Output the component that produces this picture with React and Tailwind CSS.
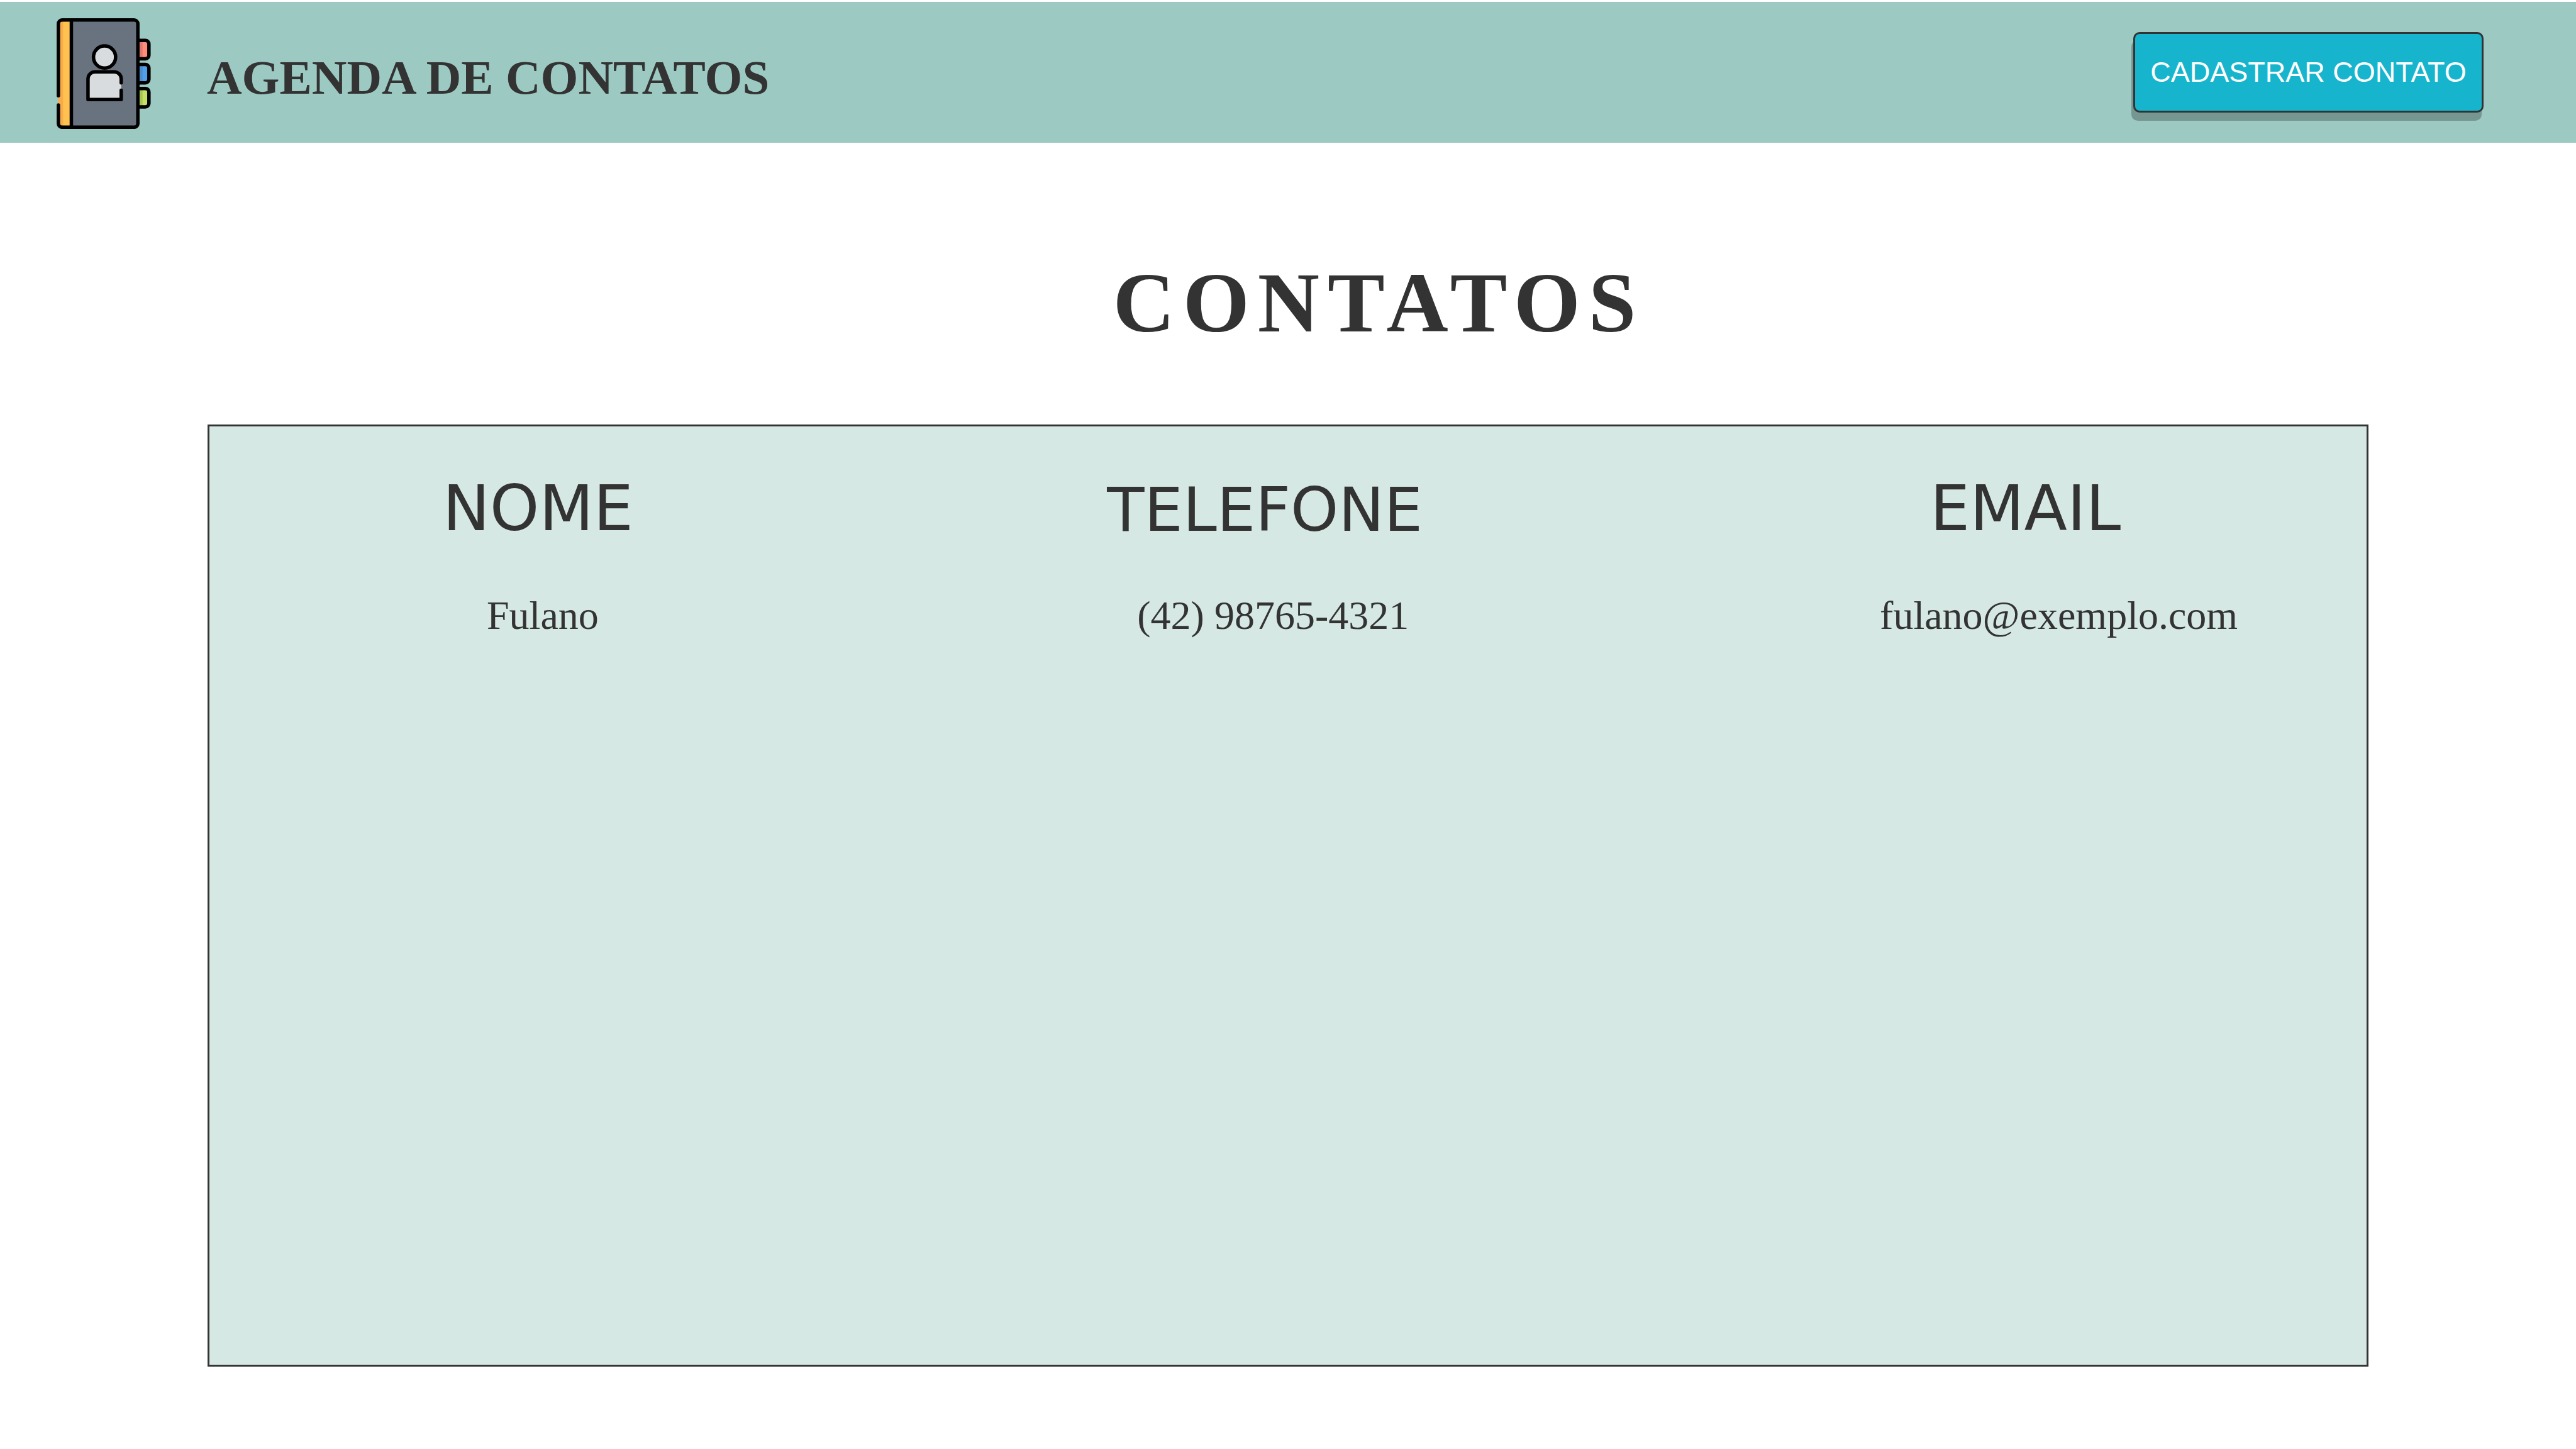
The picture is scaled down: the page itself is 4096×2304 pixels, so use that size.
const contacts = [
  { name: "Fulano", phone: "(42) 98765-4321", email: "fulano@exemplo.com" },
];

function Tab({ y, light, dark }) {
  return (
    <g transform={`translate(0 ${y})`}>
      <path d="M812 15 H880 A32 32 0 0 1 912 47 V148 A32 32 0 0 1 880 180 H812 Z" fill={light} />
      <path d="M812 15 H855 V180 H812 Z" fill={dark} />
      <path
        d="M812 15 H880 A32 32 0 0 1 912 47 V148 A32 32 0 0 1 880 180 H812"
        fill="none"
        stroke="#000"
        strokeWidth="31"
      />
    </g>
  );
}

function AddressBookLogo() {
  return (
    <svg viewBox="86 71 844 990" className="mt-1 h-[176px] w-[150px] shrink-0" role="img" aria-label="Agenda">
      <Tab y={254} light="#ff8b78" dark="#dd796f" />
      <Tab y={469} light="#529fe9" dark="#4d8ccd" />
      <Tab y={684} light="#c4df64" dark="#a6c354" />
      <path d="M218 87 H780 A33 33 0 0 1 813 120 V1013 A33 33 0 0 1 780 1046 H218 Z" fill="#69727f" />
      <path d="M218 87 H135 A34 34 0 0 0 101 121 V1012 A34 34 0 0 0 135 1046 H218 Z" fill="#ffc250" />
      <path d="M160 87 H135 A34 34 0 0 0 101 121 V1012 A34 34 0 0 0 135 1046 H160 Q144 1036 144 1012 V121 Q144 97 160 87 Z" fill="#f7ab4a" />
      <g fill="none" stroke="#000" strokeWidth="31" strokeLinecap="round" strokeLinejoin="round">
        <path d="M102 765 V121 A34 34 0 0 1 135 87 H780 A33 33 0 0 1 813 120 V1013 A33 33 0 0 1 780 1046 H135 A34 34 0 0 1 102 1012 V847" />
        <path d="M218 87 V1046" />
        <circle cx="515" cy="418" r="99" fill="#d8dcdf" />
        <path d="M664 798 H367 V612 A63 63 0 0 1 430 550 H600 A63 63 0 0 1 664 612 Z" fill="#d8dcdf" stroke="none" />
        <path d="M664 649 V612 A63 63 0 0 0 600 550 H430 A63 63 0 0 0 367 612 V798 H664 V715" />
      </g>
    </svg>
  );
}

export default function App() {
  return (
    <div className="min-h-screen bg-white pt-[3px] font-['Liberation_Serif',serif] text-[#333333]">
      <header className="flex h-[224px] items-center bg-[#9cc9c2] pr-[147px] pl-[90px]">
        <AddressBookLogo />
        <p className="mt-4 ml-[89px] text-[77px] leading-[77px] font-bold whitespace-nowrap">AGENDA DE CONTATOS</p>
        <button
          type="button"
          className="ml-auto h-32 w-[557px] cursor-pointer rounded-[10px] border-3 border-[#333333] bg-[#17b5cd] text-center font-['Liberation_Sans',sans-serif] text-[45px] leading-[52px] whitespace-nowrap text-white shadow-[-3px_13px_0_0_rgba(0,0,0,0.25)]"
        >
          CADASTRAR CONTATO
        </button>
      </header>

      <main>
        <h1 className="mt-[186px] mb-[126px] pl-[288px] text-center text-[136px] leading-[136px] font-bold tracking-[13px]">
          CONTATOS
        </h1>

        <section className="mx-[330px] min-h-[65vh] border-3 border-[#333333] bg-[#d5e8e3] pt-[81px]">
          <table className="w-full table-fixed text-left">
            <thead className="align-top font-['DejaVu_Sans',sans-serif] text-[100px] leading-[100px]">
              <tr>
                <th scope="col" className="w-[31%] pb-[88px] pl-[371px] font-normal">NOME</th>
                <th scope="col" className="w-[36%] pb-[84px] pl-[364px] text-[97px] leading-[104px] font-normal">TELEFONE</th>
                <th scope="col" className="w-[33%] pb-[88px] pl-[438px] font-normal">EMAIL</th>
              </tr>
            </thead>
            <tbody className="text-[64px] leading-[64px]">
              {contacts.map((c) => (
                <tr key={c.email}>
                  <td className="pl-[441px]">{c.name}</td>
                  <td className="pl-[412px]">{c.phone}</td>
                  <td className="pl-[358px]">{c.email}</td>
                </tr>
              ))}
            </tbody>
          </table>
        </section>
      </main>
    </div>
  );
}
